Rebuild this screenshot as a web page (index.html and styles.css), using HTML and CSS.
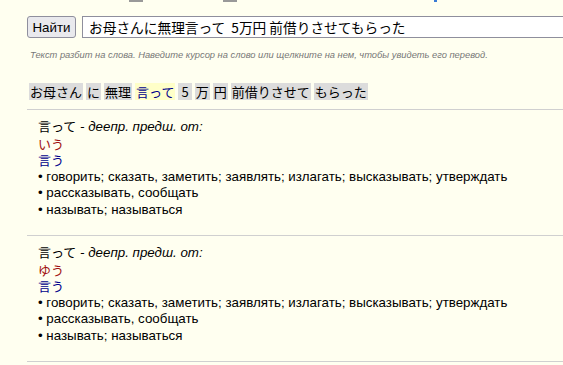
FILE: index.html
```html
<!DOCTYPE html>
<html lang="ru">
  <head>
    <meta charset="utf-8">
    <title>Японско-русский словарь</title>
    <link rel="stylesheet" href="styles.css">
  </head>
  <body>
    <div class="top-marks">
      <span class="mark"></span>
      <span class="mark"></span>
      <span class="mark mark-blue"></span>
    </div>

    <form class="search">
      <button type="button">Найти</button>
      <input type="text" value="お母さんに無理言って  5万円 前借りさせてもらった">
    </form>

    <p class="hint">
      Текст разбит на слова. Наведите курсор на слово или щелкните на нем, чтобы увидеть его перевод.
    </p>

    <div class="words">
      <span class="word">お母さん</span>
      <span class="word">に</span>
      <span class="word">無理</span>
      <span class="word word-active">言って</span>
      <span class="word word-num">5</span>
      <span class="word">万</span>
      <span class="word">円</span>
      <span class="word">前借りさせて</span>
      <span class="word">もらった</span>
    </div>

    <div class="entries">
      <div class="entry">
        <div class="entry-head"><span class="jp">言って</span> <i>- деепр. предш. от:</i></div>
        <div class="reading jp">いう</div>
        <div class="writing jp">言う</div>
        <div class="sense">• говорить; сказать, заметить; заявлять; излагать; высказывать; утверждать</div>
        <div class="sense">• рассказывать, сообщать</div>
        <div class="sense">• называть; называться</div>
      </div>

      <div class="entry">
        <div class="entry-head"><span class="jp">言って</span> <i>- деепр. предш. от:</i></div>
        <div class="reading jp">ゆう</div>
        <div class="writing jp">言う</div>
        <div class="sense">• говорить; сказать, заметить; заявлять; излагать; высказывать; утверждать</div>
        <div class="sense">• рассказывать, сообщать</div>
        <div class="sense">• называть; называться</div>
      </div>
    </div>
  </body>
</html>
```

FILE: styles.css
```css
html {
  background-color: #fffff0;
}

body {
  margin: 0;
  padding: 0 0 0 27px;
  overflow: hidden;
  font-family: "Liberation Sans", Arial, "Noto Sans CJK JP", sans-serif;
  font-size: 13.33px;
  color: #000;
}

.jp {
  font-family: "Noto Sans CJK JP", sans-serif;
  font-size: 13px;
}

.top-marks {
  display: flex;
  height: 2px;
  padding-left: 102px;
  gap: 80px;
}

.mark {
  width: 14px;
  height: 2px;
  background-color: #999;
}

.mark-blue {
  width: 3px;
  margin-left: 117px;
  background-color: #3a7bd5;
}

.search {
  display: flex;
  gap: 6px;
  margin-top: 14px;
  white-space: nowrap;
}

.search button {
  flex: none;
  height: 22px;
  width: 49px;
  padding: 0;
  border: 1px solid #8f8f9d;
  border-radius: 3px;
  background-color: #e9e9ed;
  font-family: "Liberation Sans", Arial, sans-serif;
  font-size: 13.33px;
  color: #000;
}

.search input {
  flex: none;
  width: 520px;
  height: 22px;
  box-sizing: border-box;
  padding: 0 6px;
  border: 1px solid #8f8f9d;
  border-radius: 0;
  background-color: #fff;
  font-family: "Noto Sans CJK JP", sans-serif;
  font-size: 13.7px;
  color: #000;
}

.hint {
  margin: 12px 0 0 3px;
  font-size: 9.33px;
  font-style: italic;
  color: #777;
}

.words {
  display: flex;
  gap: 3px;
  margin-top: 23px;
  padding: 0 0 9px 2px;
  border-bottom: 1px solid #d0d0d0;
  font-family: "Noto Sans CJK JP", sans-serif;
  font-size: 13px;
  white-space: nowrap;
}

.word {
  height: 17px;
  line-height: 17px;
  padding: 0 1px;
  background-color: #dcdcdc;
}

.word-num {
  padding: 0 3px;
}

.word-active {
  background-color: #ffffc8;
  color: #00008b;
}

.entry {
  padding: 8px 0 17px 11px;
  border-bottom: 1px solid #d0d0d0;
  line-height: 16.5px;
  white-space: nowrap;
}

.reading {
  color: #a01010;
}

.writing {
  color: #00008b;
}
```
